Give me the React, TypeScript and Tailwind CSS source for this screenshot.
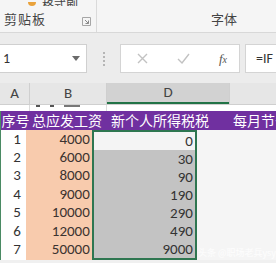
import React from 'react';

const colA = ['1', '2', '3', '4', '5', '6', '7'];
const colB = ['4000', '6000', '8000', '9000', '10000', '12000', '50000'];
const colD = ['0', '30', '90', '190', '290', '490', '9000'];

const font = "font-['Calibri','Open_Sans','Noto_Sans_CJK_SC',sans-serif]";

const App: React.FC = () => {
  return (
    <div className={`w-[276px] h-[263px] overflow-hidden bg-[#f0f0f0] text-[#333] ${font}`}>
      {/* ribbon */}
      <div className="h-[33px] flex bg-[#f5f5f5] border-b border-[#d8d8d8]">
        <div className="w-[97px] border-r border-[#dadada] flex flex-col">
          <div className="h-[6px] overflow-hidden flex items-end gap-[6px] pl-[28px]">
            <div className="w-[8px] h-[4px] bg-[#e9a23b] rounded-b-sm" />
            <span className="text-[12px] leading-none -mb-[6px] text-[#444]">格式刷</span>
          </div>
          <div className="flex-1 flex items-center justify-between pl-[4px] pr-[5px] pt-[2px]">
            <span className="text-[13px] text-[#444] tracking-[1px]">剪贴板</span>
            <svg width="9" height="9" viewBox="0 0 9 9" className="mt-[3px]">
              <path d="M0.5 0.5h8v8h-8z" fill="none" stroke="#a6a6a6" />
              <path d="M3 3l3.5 3.5M6.5 3.5v3h-3" fill="none" stroke="#8a8a8a" />
            </svg>
          </div>
        </div>
        <div className="flex-1 flex items-end pb-[3px] pl-[114px]">
          <span className="text-[13px] text-[#444]">字体</span>
        </div>
      </div>

      {/* formula bar */}
      <div className="h-[50px] flex items-start pt-[11px] bg-[#ececec]">
        <div className="w-[87px] h-[29px] bg-white border border-[#d0d0d0] border-l-0 flex items-center justify-between pl-[3px] pr-[6px]">
          <span className="text-[14px] text-[#333]">1</span>
          <svg width="8" height="5" viewBox="0 0 8 5">
            <path d="M0 0h8L4 5z" fill="#6b6b6b" />
          </svg>
        </div>
        <div className="w-[33px] h-[29px] flex flex-col items-center justify-center gap-[2px] pl-[0px]">
          <div className="w-[2px] h-[2px] bg-[#b5b5b5]" />
          <div className="w-[2px] h-[2px] bg-[#b5b5b5]" />
          <div className="w-[2px] h-[2px] bg-[#b5b5b5]" />
          <div className="w-[2px] h-[2px] bg-[#b5b5b5]" />
        </div>
        <div className="w-[120px] h-[29px] bg-white border border-[#d4d4d4] flex items-center pl-[16px] pr-[12px] justify-between">
          <svg width="11" height="11" viewBox="0 0 11 11">
            <path d="M1 1l9 9M10 1l-9 9" stroke="#c2c2c2" strokeWidth="1.4" />
          </svg>
          <svg width="13" height="11" viewBox="0 0 13 11">
            <path d="M1 6l4 4 7-9" fill="none" stroke="#c2c2c2" strokeWidth="1.4" />
          </svg>
          <span className="text-[13px] italic font-['Liberation_Serif',serif] text-[#555]">f<span className="text-[10px]">x</span></span>
        </div>
        <div className="flex-1 ml-[5px] h-[29px] bg-white border border-[#d4d4d4] border-r-0 flex items-center pl-[10px]">
          <span className="text-[14px] text-[#333]">=IF</span>
        </div>
      </div>

      {/* column headers */}
      <div className="h-[22px] flex bg-[#e6e6e6] border-b border-[#cfcfcf] text-[15px] text-[#444]">
        <div className="w-[30px] border-r border-[#cfcfcf] flex items-center justify-center">A</div>
        <div className="w-[77px] border-r border-[#cfcfcf] flex items-center justify-center">B</div>
        <div className="w-[122px] bg-[#d2d2d2] border-b-2 border-[#217346] flex items-center justify-center">D</div>
        <div className="flex-1 border-l border-[#cfcfcf]" />
      </div>

      {/* clipped row */}
      <div className="h-[6px] flex bg-white overflow-hidden">
        <div className="w-[30px] border-r border-[#dcdcdc]" />
        <div className="w-[77px] border-r border-[#dcdcdc] flex gap-[10px] pl-[6px]">
          <div className="w-[4px] h-[2px] bg-[#555]" />
          <div className="w-[4px] h-[2px] bg-[#555]" />
          <div className="w-[16px] h-[2px] bg-[#777]" />
        </div>
        <div className="flex-1" />
      </div>

      {/* purple header row */}
      <div className="h-[19px] flex bg-[#7030a0] text-white text-[14px] leading-[19px] font-['Noto_Sans_CJK_SC',sans-serif] border-l border-[#4a8a63]">
        <div className="w-[29px] text-center whitespace-nowrap overflow-hidden">序号</div>
        <div className="w-[78px] pl-[2px] whitespace-nowrap overflow-hidden">总应发工资</div>
        <div className="w-[122px] pl-[3px] whitespace-nowrap overflow-hidden">新个人所得税税</div>
        <div className="flex-1 pl-[3px] whitespace-nowrap overflow-hidden">每月节省</div>
      </div>

      {/* body */}
      <div className="flex text-[15px] leading-none">
        <div className="w-[30px] bg-white border-l border-[#4a8a63] flex flex-col">
          {colA.map((v) => (
            <div key={v} className="h-[18.4px] flex items-center justify-end pr-[5px]">{v}</div>
          ))}
        </div>
        <div className="w-[77px] bg-[#f8cbad] flex flex-col text-[#3c3330]">
          {colB.map((v) => (
            <div key={v} className="h-[18.4px] flex items-center justify-end pr-[2px]">{v}</div>
          ))}
        </div>
        <div className="w-[122px] h-[130px] border-2 border-[#2e7650] bg-[#c3c3c3] flex flex-col">
          {colD.map((v, i) => (
            <div
              key={v}
              className={`h-[18.2px] flex items-center justify-end pr-[2px] ${i === 0 ? 'bg-[#f4f4f4]' : ''}`}
            >
              {v}
            </div>
          ))}
        </div>
        <div className="flex-1 bg-[#f5f5f5] flex flex-col justify-end pb-[3px] pl-[1px]">
          <span className="text-[9px] text-white/80 whitespace-nowrap font-['Noto_Sans_CJK_SC',sans-serif]">头条 @职场老兵ysy</span>
        </div>
      </div>
    </div>
  );
};

export default App;
